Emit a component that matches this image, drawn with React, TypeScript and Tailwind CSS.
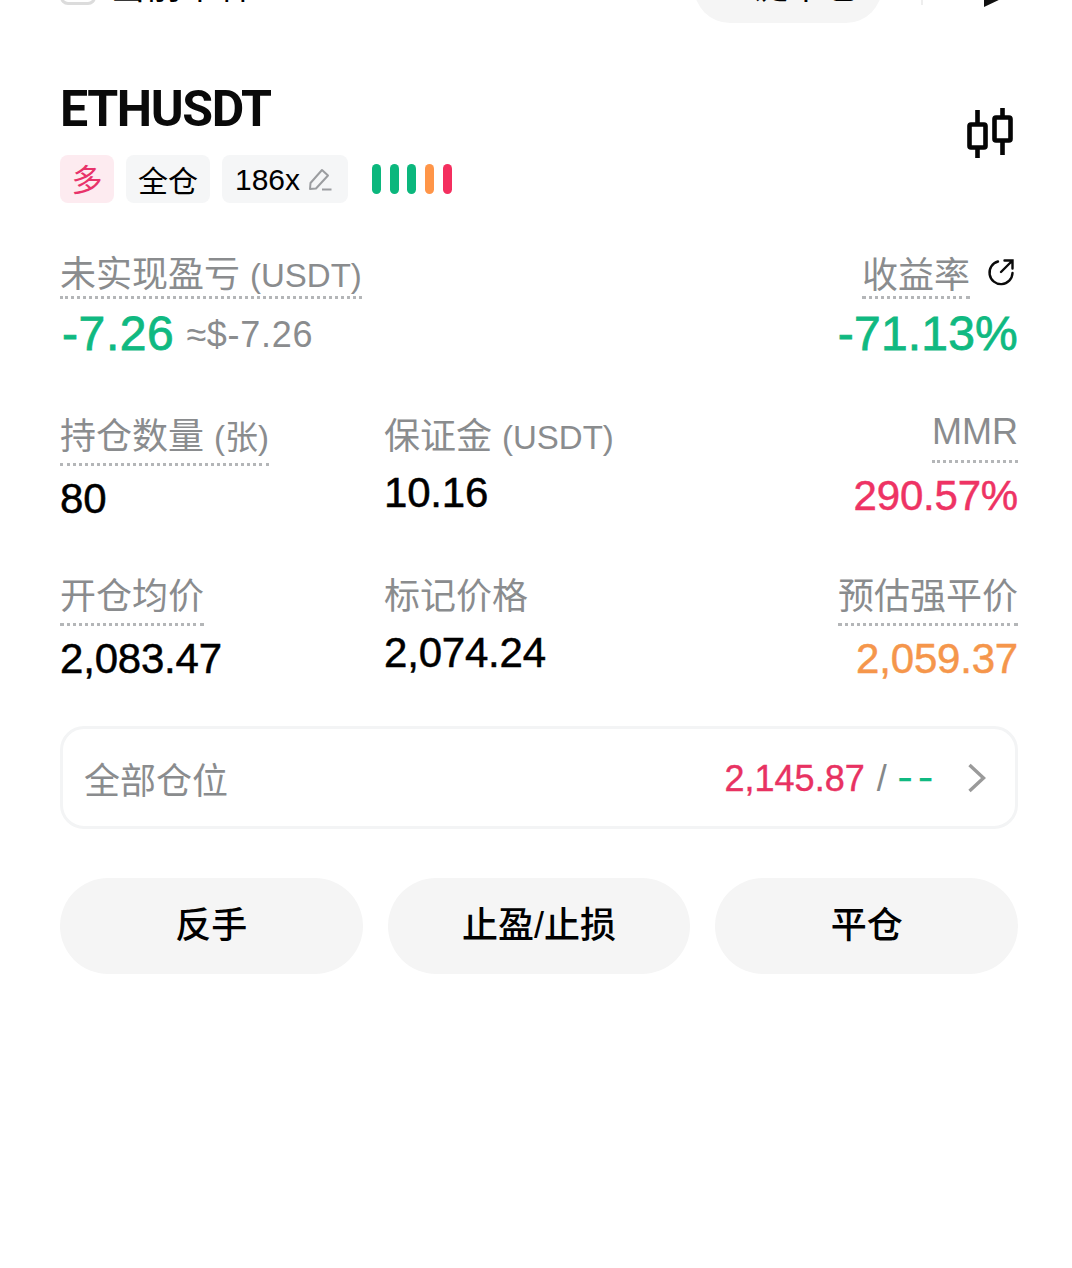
const FONT = "font-['Liberation_Sans','Noto_Sans_CJK_SC',sans-serif]";

function Label({
  text,
  unit,
  dotted = true,
  leading = "leading-[46px]",
}: {
  text: string;
  unit?: string;
  dotted?: boolean;
  leading?: string;
}) {
  return (
    <div
      className={`inline-block h-[52px] text-[36px] text-[#8a8c8e] ${leading} ${
        dotted ? "border-b-[3px] border-dotted border-[#b4b6b8]" : ""
      }`}
    >
      {text}
      {unit && <span className="ml-[10px] text-[33px]">{unit}</span>}
    </div>
  );
}

function Stat({
  label,
  unit,
  value,
  color = "text-black",
  dotted = true,
  right = false,
  leading,
  className = "",
}: {
  label: string;
  unit?: string;
  value: string;
  color?: string;
  dotted?: boolean;
  right?: boolean;
  leading?: string;
  className?: string;
}) {
  return (
    <div className={`flex flex-col ${right ? "items-end" : "items-start"} ${className}`}>
      <Label text={label} unit={unit} dotted={dotted} leading={leading} />
      <div className={`${dotted ? "mt-[5px]" : "-mt-[1px]"} text-[42px] leading-[56px] tracking-[-0.2px] [-webkit-text-stroke:0.5px] ${color}`}>{value}</div>
    </div>
  );
}

function Tag({ children, className = "" }: { children: React.ReactNode; className?: string }) {
  return <div className={`flex h-[48px] items-center rounded-[8px] ${className}`}>{children}</div>;
}

export default function App() {
  return (
    <div className={`h-[1268px] w-[1072px] overflow-hidden bg-white pl-[60px] pr-[54px] text-black ${FONT}`}>
      {/* row cut off by the top of the screenshot */}
      <div className="-mt-[49px] flex h-[72px] items-center">
        <div className="h-[36px] w-[36px] rounded-[8px] border-[3px] border-[#dcdcdc]" />
        <div className="ml-[14px] text-[36px] leading-[48px]">当前币种</div>
        <div className="ml-auto flex h-[72px] w-[188px] items-center justify-center rounded-full bg-[#f5f5f5] text-[36px]">
          一键平仓
        </div>
        <div className="ml-[39px] h-[36px] w-[2px] bg-[#eeeeee]" />
        <svg className="ml-[60px] mr-[5px] h-[72px] w-[30px]" viewBox="0 0 30 72">
          <path d="M1 20v36l19-9-3-5-9 3V20z" fill="#111" />
        </svg>
      </div>

      <div className="mt-[57px] flex items-center justify-between">
        <div className="flex flex-col">
          <div className="font-['Roboto'] text-[50px] leading-[58px] font-bold tracking-[-1.4px] text-[#0a0a0a]">ETHUSDT</div>
          <div className="mt-[17px] flex items-center">
            <Tag className="w-[54px] justify-center bg-[#fdebf0] pt-[4px] text-[31px] text-[#e8336a]">多</Tag>
            <Tag className="ml-[12px] w-[84px] justify-center bg-[#f5f6f7] pt-[4px] text-[30px]">全仓</Tag>
            <Tag className="ml-[12px] w-[126px] justify-center gap-[8px] bg-[#f5f6f7] pr-[3px] text-[30px]">
              186x
              <svg className="h-[24px] w-[24px]" viewBox="0 0 24 24" fill="none" stroke="#9b9da0" strokeWidth="2">
                <path d="M2 22l.5-6L14 3l6 5.5L8 21.5z" strokeLinejoin="round" />
                <path d="M14 22.5h9.5" />
              </svg>
            </Tag>
            <div className="ml-[24px] flex items-center gap-[8.7px]">
              <div className="h-[30px] w-[9px] rounded-full bg-[#0bb77d]" />
              <div className="h-[30px] w-[9px] rounded-full bg-[#0bb77d]" />
              <div className="h-[30px] w-[9px] rounded-full bg-[#0bb77d]" />
              <div className="h-[30px] w-[9px] rounded-full bg-[#ff9548]" />
              <div className="h-[30px] w-[9px] rounded-full bg-[#f42f5f]" />
            </div>
          </div>
        </div>
        <svg className="mb-[18px] mr-[5px] h-[50px] w-[46px]" viewBox="0 0 46 50" fill="none" stroke="#050505" strokeWidth="4.6">
          <path d="M10.5 2v14M10.5 40v10M35.5 0v9M35.5 33v14" />
          <rect x="2.5" y="16.5" width="16" height="23" rx="1.5" />
          <rect x="27.5" y="9.5" width="16" height="23" rx="1.5" />
        </svg>
      </div>

      <div className="mt-[44px] flex items-start justify-between">
        <div className="flex flex-col items-start">
          <Label text="未实现盈亏" unit="(USDT)" leading="leading-[56px]" />
          <div className="mt-[3px] flex items-baseline">
            <span className="ml-[2px] text-[48px] leading-[64px] tracking-[0.6px] [-webkit-text-stroke:0.8px] text-[#10b981]">-7.26</span>
            <span className="ml-[12px] -translate-y-[3px] text-[36px] tracking-[0.7px] text-[#8a8c8e]">≈$-7.26</span>
          </div>
        </div>
        <div className="flex flex-col items-end">
          <div className="flex items-start">
            <Label text="收益率" leading="leading-[58px]" />
            <svg className="ml-[17px] mr-[3px] mt-[11px] h-[28px] w-[28px]" viewBox="0 0 28 28" fill="none" stroke="#0a0a0a" strokeWidth="2.4" strokeLinecap="round">
              <path d="M11 3.5A11.5 11.5 0 1 0 25.5 15" />
              <path d="M14 14L25 3M17.5 2.5h8v8" />
            </svg>
          </div>
          <div className="mt-[3px] text-[48px] leading-[64px] tracking-[0.2px] [-webkit-text-stroke:0.8px] text-[#10b981]">-71.13%</div>
        </div>
      </div>

      <div className="mt-[48px] grid grid-cols-[324px_1fr_auto] items-start gap-y-[47px]">
        <Stat label="持仓数量" unit="(张)" value="80" />
        <Stat label="保证金" unit="(USDT)" value="10.16" dotted={false} />
        <Stat label="MMR" value="290.57%" color="text-[#ee3364]" right leading="leading-[42px]" className="-mt-[3px]" />
        <Stat label="开仓均价" value="2,083.47" />
        <Stat label="标记价格" value="2,074.24" dotted={false} />
        <Stat label="预估强平价" value="2,059.37" color="text-[#f5964b]" right />
      </div>

      <div className="mt-[39px] flex h-[103px] items-center rounded-[24px] border-[3px] border-[#f3f4f5] pl-[21px] pr-[28px]">
        <span className="mt-[8px] text-[36px] text-[#8a8c8e]">全部仓位</span>
        <span className="ml-auto mt-[2px] text-[36px] [-webkit-text-stroke:0.4px] text-[#e83262]">2,145.87</span>
        <span className="ml-[12px] mt-[2px] text-[36px] text-[#858889]">/</span>
        <span className="ml-[10px] font-['Inter'] text-[36px] font-medium tracking-[4px] text-[#10b981]">--</span>
        <svg className="ml-[29px] h-[30px] w-[20px]" viewBox="0 0 20 30" fill="none" stroke="#9a9a9a" strokeWidth="3.4">
          <path d="M2.5 2l14 13-14 13" />
        </svg>
      </div>

      <div className="mt-[49px] grid grid-cols-3 gap-[25px]">
        <button className="flex h-[96px] items-center justify-center rounded-full bg-[#f5f5f5] text-[36px] font-medium">反手</button>
        <button className="flex h-[96px] items-center justify-center rounded-full bg-[#f5f5f5] text-[36px] font-medium">止盈/止损</button>
        <button className="flex h-[96px] items-center justify-center rounded-full bg-[#f5f5f5] text-[36px] font-medium">平仓</button>
      </div>
    </div>
  );
}
